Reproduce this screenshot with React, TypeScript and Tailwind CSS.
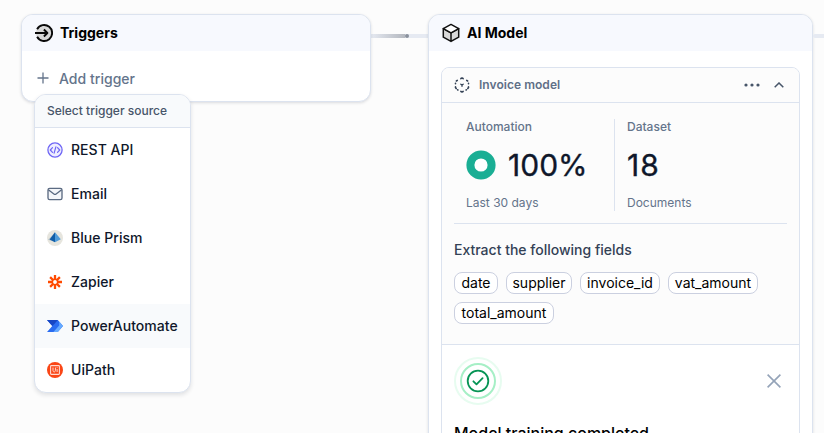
import type { ReactNode } from "react";

const TriggersIcon = () => (
  <svg width="18" height="18" viewBox="0 0 18 18" fill="none" stroke="#0a0a0a" strokeWidth="1.9">
    <circle cx="9" cy="9" r="8" fill="#d9d9d9" stroke="none" />
    <path d="M2.1 5.2A8 8 0 1 1 2.1 12.8" />
    <path d="M0 9h12.2M8.9 5.5 12.4 9l-3.5 3.5" strokeLinejoin="round" />
  </svg>
);

const CubeIcon = () => (
  <svg width="18" height="20" viewBox="0 0 18 20" fill="none" stroke="#111" strokeWidth="1.5" strokeLinejoin="round">
    <path d="M1.3 5.6 9 9.8v8.6l-7.7-4.2zM16.7 5.6 9 9.8v8.6l7.7-4.2z" fill="#d9d9d9" />
    <path d="M9 1.4 16.7 5.6 9 9.8 1.3 5.6z" fill="#fff" />
  </svg>
);

const ModelIcon = () => (
  <svg width="16" height="16" viewBox="0 0 16 16" fill="none" stroke="#334155" strokeWidth="1.6" strokeLinecap="round" strokeLinejoin="round">
    <path d="M6.9 1.6 8 1.1l1.1.5M6.9 14.4l1.1.5 1.1-.5" />
    <path d="M3.3 3.4l-.9.6M12.7 3.4l.9.6M1.5 6.4v.3M14.5 6.4v.3M1.5 9.9v.7l.7.9M14.5 9.9v.7l-.7.9M3.6 12.8l.3.2M12.4 12.8l-.3.2" />
    <path d="M6.8 7.2 8 8l1.2-.8M8 8v1.3" strokeWidth="1.3" />
  </svg>
);

const RestIcon = () => (
  <svg width="16" height="16" viewBox="0 0 16 16" fill="none" stroke="#6f66f5" strokeLinecap="round" strokeLinejoin="round">
    <circle cx="8" cy="8" r="7.1" strokeWidth="1.3" fill="#eeedff" />
    <path d="M5.5 5.7 3.3 8l2.2 2.3M10.5 5.7 12.7 8l-2.2 2.3M8.9 4.8l-1.8 6.4" strokeWidth="1.2" />
  </svg>
);

const MailIcon = () => (
  <svg width="16" height="16" viewBox="0 0 16 16" fill="none" stroke="#5b6b82" strokeWidth="1.35" strokeLinejoin="round">
    <rect x="1" y="2.4" width="14" height="11.2" rx="1.7" fill="#f4f6f9" />
    <path d="M1.3 3.8 6.9 8a1.8 1.8 0 0 0 2.2 0l5.6-4.2" />
  </svg>
);

const PrismIcon = () => (
  <svg width="16" height="16" viewBox="0 0 16 16">
    <circle cx="8" cy="8" r="8" fill="#e6e5de" />
    <path d="M1 9.8 8 2.2v9.8z" fill="#b9c3c8" />
    <path d="M8 2.3v10L2.6 9.6z" fill="#0f5da8" />
    <path d="M8 2.3l5.8 7L8 12.3z" fill="#4f9bd9" />
  </svg>
);

const ZapierIcon = () => (
  <svg width="16" height="16" viewBox="0 0 16 16" fill="none" stroke="#ff4a00" strokeWidth="2.3">
    <path d="M8 1v4.6M8 10.4V15M1 8h4.6M10.4 8H15M3.1 3.1l3.2 3.2M9.7 9.7l3.2 3.2M3.1 12.9l3.2-3.2M9.7 6.3l3.2-3.2" />
    <circle cx="8" cy="8" r="2.7" strokeWidth="1.6" />
  </svg>
);

const PowerIcon = () => (
  <svg width="16" height="16" viewBox="0 0 16 16">
    <path d="M0 2h10.8L16 8l-5.2 6H0l5.3-6z" fill="#2a6cf0" />
    <path d="M0 2h10.8L8 5.2 5.3 8z" fill="#1746c4" />
    <path d="M12.2 3.6 16 8l-5.2 6H6.4l5.8-6.4z" fill="#66aaff" />
  </svg>
);

const UiPathIcon = () => (
  <svg width="16" height="16" viewBox="0 0 16 16" fill="none" stroke="#ffd9cf">
    <circle cx="8" cy="8" r="8" fill="#fa4616" stroke="none" />
    <rect x="3.6" y="3.6" width="8.8" height="8.8" rx=".6" strokeWidth="1.1" />
    <path d="M6 5.5v2.8c0 1.1.5 1.6 1.2 1.6s1.2-.5 1.2-1.6V5.5M10.1 7v3M10.1 5.3v.8" strokeWidth="1" />
  </svg>
);

const sources: { label: string; icon: ReactNode; active?: boolean }[] = [
  { label: "REST API", icon: <RestIcon /> },
  { label: "Email", icon: <MailIcon /> },
  { label: "Blue Prism", icon: <PrismIcon /> },
  { label: "Zapier", icon: <ZapierIcon /> },
  { label: "PowerAutomate", icon: <PowerIcon />, active: true },
  { label: "UiPath", icon: <UiPathIcon /> },
];

const fields = [
  { name: "date", width: "w-11" },
  { name: "supplier", width: "w-[66px]" },
  { name: "invoice_id", width: "w-20" },
  { name: "vat_amount", width: "w-[90px]" },
  { name: "total_amount", width: "w-[100px]" },
];

function SourceMenu() {
  return (
    <div className="absolute left-3 top-[79px] z-10 w-[157px] overflow-hidden rounded-xl border border-[#dce3ef] bg-white shadow-[0_2px_4px_rgba(15,23,42,0.12)]">
      <div className="flex h-[33px] items-center border-b border-[#dce3ef] bg-[#f8fafc] pl-3 text-[12px] font-medium text-[#475569]">
        Select trigger source
      </div>
      {sources.map((s) => (
        <div
          key={s.label}
          className={`flex h-11 items-center gap-2 whitespace-nowrap pl-3 text-[14px] font-medium tracking-[0.03px] text-[#0f172a] ${s.active ? "bg-[#f8fafc]" : ""}`}
        >
          {s.icon}
          <span className="pb-0.5">{s.label}</span>
        </div>
      ))}
    </div>
  );
}

export default function App() {
  return (
    <div className="flex h-[433px] w-[824px] items-start overflow-hidden bg-[#fcfcfc] pl-[21px] pt-3.5 font-['Inter',sans-serif]">
      <section className="relative h-[88px] w-[350px] shrink-0 rounded-xl border border-[#dce3ef] bg-white shadow-[0_1px_3px_rgba(15,23,42,0.14)]">
        <div className="flex h-9 items-center gap-[7px] rounded-t-[11px] bg-[#f7f9fe] pl-[13px] text-[14px] font-bold text-black">
          <TriggersIcon />
          <span className="pb-0.5">Triggers</span>
        </div>
        <div className="mt-[17px] flex h-5 items-center pl-[15px] text-[14px] font-medium tracking-[0.03px] text-[#64748b]">
          <svg width="12" height="12" viewBox="0 0 12 12" stroke="#64748b" strokeWidth="1.3" className="mr-2.5">
            <path d="M6 .5v11M.5 6h11" />
          </svg>
          <span>Add trigger</span>
        </div>
        <SourceMenu />
      </section>

      <div className="mt-5 flex h-1 w-[57px] shrink-0 items-center bg-[#e6eaf2]">
        <div className="h-1 w-[34px] bg-linear-to-r from-[#e6eaf2] to-[#b4b8bf]" />
        <div className="size-1 rounded-full bg-[#8a919c]" />
      </div>

      <section className="h-[520px] w-[385px] shrink-0 rounded-xl border border-[#dce3ef] bg-white shadow-[0_1px_3px_rgba(15,23,42,0.14)]">
        <div className="flex h-9 items-center gap-[7px] rounded-t-[11px] bg-[#f7f9fe] pl-[13px] text-[14px] font-bold text-black">
          <CubeIcon />
          <span className="pb-0.5">AI Model</span>
        </div>
        <div className="mx-3 mt-4 h-[450px] rounded-lg border border-[#dce3ef] bg-white">
          <div className="flex h-[35px] items-center rounded-t-[7px] border-b border-[#dce3ef] bg-[#fcfcfc] pl-3 pr-[15px]">
            <ModelIcon />
            <span className="ml-[9px] text-[12px] font-semibold tracking-[0.04px] text-[#5f6f87]">Invoice model</span>
            <svg width="16" height="4" viewBox="0 0 16 4" fill="#475569" className="ml-auto">
              <circle cx="2" cy="2" r="1.6" />
              <circle cx="8" cy="2" r="1.6" />
              <circle cx="14" cy="2" r="1.6" />
            </svg>
            <svg width="10" height="6" viewBox="0 0 10 6" fill="none" stroke="#475569" strokeWidth="1.5" className="ml-3.5">
              <path d="M.7 5.3 5 1l4.3 4.3" />
            </svg>
          </div>
          <div className="h-[242px] border-b border-[#dce3ef] bg-[#fcfcfc] px-3 pt-4">
            <div className="flex h-[105px] border-b border-[#dce3ef]">
              <div className="h-[92px] w-[161px] border-r border-[#dce3ef] pl-3 text-[12px] text-[#64748b]">
                <div className="h-4 font-medium leading-4">Automation</div>
                <div className="my-[14px] flex h-8 items-center gap-3">
                  <svg width="30" height="30" viewBox="0 0 30 30">
                    <circle cx="15" cy="15" r="10.6" fill="#fff" stroke="#1aae94" strokeWidth="8" />
                  </svg>
                  <span className="text-[30px] leading-8 text-[#0f172a] [-webkit-text-stroke:0.35px_#0f172a]">100%</span>
                </div>
                <div className="h-4 leading-4">Last 30 days</div>
              </div>
              <div className="pl-3 text-[12px] text-[#64748b]">
                <div className="h-4 font-medium leading-4">Dataset</div>
                <div className="my-[14px] h-8 text-[30px] leading-8 tracking-[1px] text-[#0f172a] [-webkit-text-stroke:0.35px_#0f172a]">18</div>
                <div className="h-4 leading-4">Documents</div>
              </div>
            </div>
            <div className="mt-4 text-[14px] font-medium leading-5 text-[#334155]">Extract the following fields</div>
            <div className="mt-3 flex flex-wrap gap-2">
              {fields.map((f) => (
                <span key={f.name} className={`flex h-[22px] items-center justify-center rounded-lg border border-[#cbd0e0] bg-white text-[14px] leading-5 text-black ${f.width}`}>
                  {f.name}
                </span>
              ))}
            </div>
          </div>
          <div className="px-3 pt-3">
            <div className="flex h-12 items-center justify-between pr-1.5">
              <svg width="48" height="48" viewBox="0 0 48 48" fill="none">
                <circle cx="24" cy="24" r="23" stroke="#e7fcf0" strokeWidth="2" />
                <circle cx="24" cy="24" r="17" stroke="#a6efc6" strokeWidth="2" />
                <circle cx="24" cy="24" r="10.3" stroke="#079455" strokeWidth="1.8" />
                <path d="m19.4 24.3 3.1 3.1 6.1-6.2" stroke="#079455" strokeWidth="1.8" strokeLinecap="round" strokeLinejoin="round" />
              </svg>
              <svg width="14" height="14" viewBox="0 0 14 14" stroke="#94a3b8" strokeWidth="1.6">
                <path d="m.6.6 12.8 12.8M13.4.6.6 13.4" />
              </svg>
            </div>
            <div className="mt-4 text-[16px] font-medium leading-6 text-black">Model training completed</div>
          </div>
        </div>
      </section>
      <div className="mt-5 h-1 w-6 shrink-0 rounded-l-full bg-[#e6eaf2]" />
    </div>
  );
}
